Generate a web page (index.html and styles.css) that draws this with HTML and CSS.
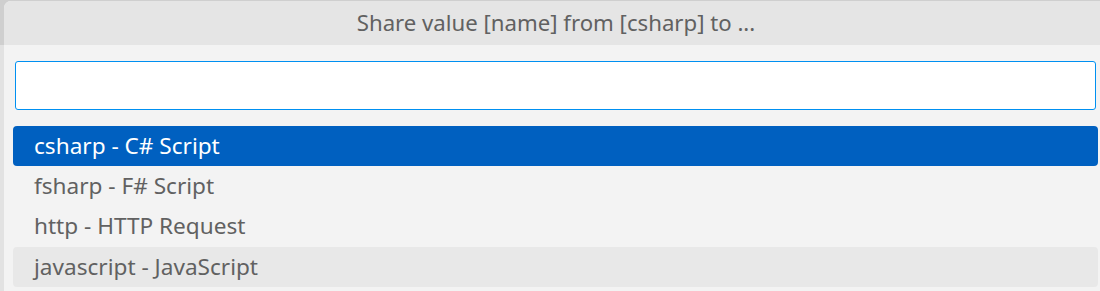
FILE: index.html
```html
<!DOCTYPE html>
<html>
<head>
<meta charset="utf-8">
<link rel="stylesheet" href="styles.css">
</head>
<body>
<div class="panel">
  <div class="title">Share value [name] from [csharp] to ...</div>
  <div class="body">
    <div class="input-box"><input class="input" type="text"></div>
    <div class="list">
      <div class="row selected">csharp - C# Script</div>
      <div class="row">fsharp - F# Script</div>
      <div class="row">http - HTTP Request</div>
      <div class="row hover">javascript - JavaScript</div>
    </div>
  </div>
</div>
</body>
</html>
```
FILE: styles.css
```css
html, body {
  margin: 0;
  padding: 0;
}
body {
  width: 1100px;
  height: 291px;
  overflow: hidden;
  background: linear-gradient(#cfcfcf 0, #cfcfcf 45px, #e2e2e2 45px);
  font-family: "Noto Sans", "Open Sans", sans-serif;
  padding: 1px 0 0 4px;
  box-sizing: border-box;
}
.panel {
  height: 290px;
  background: #f3f3f3;
  border-top-left-radius: 7px;
  overflow: hidden;
}
.title {
  height: 44px;
  background: #e5e5e5;
  color: #616161;
  font-size: 22.2px;
  line-height: 44px;
  text-align: center;
  padding-left: 8px;
}
.body {
  padding: 16px 2px 0 9px;
  display: flex;
  flex-direction: column;
}
.input-box {
  margin: 0 2px 0 2px;
  height: 49px;
  box-sizing: border-box;
  border: 1px solid #0090f1;
  border-radius: 3px;
  background: #fff;
}
.input {
  border: none;
  outline: none;
  background: transparent;
  width: 100%;
  height: 100%;
  padding: 0 10px;
  box-sizing: border-box;
  font: inherit;
}
.list {
  margin-top: 16px;
  display: flex;
  flex-direction: column;
}
.row {
  height: 40px;
  line-height: 40px;
  padding-left: 21px;
  border-radius: 4px;
  color: #616161;
  font-size: 22.6px;
}
.row.selected {
  background: #0060c0;
  color: #fff;
}
.row.hover {
  margin-top: 1px;
  background: #e8e8e8;
}
```
